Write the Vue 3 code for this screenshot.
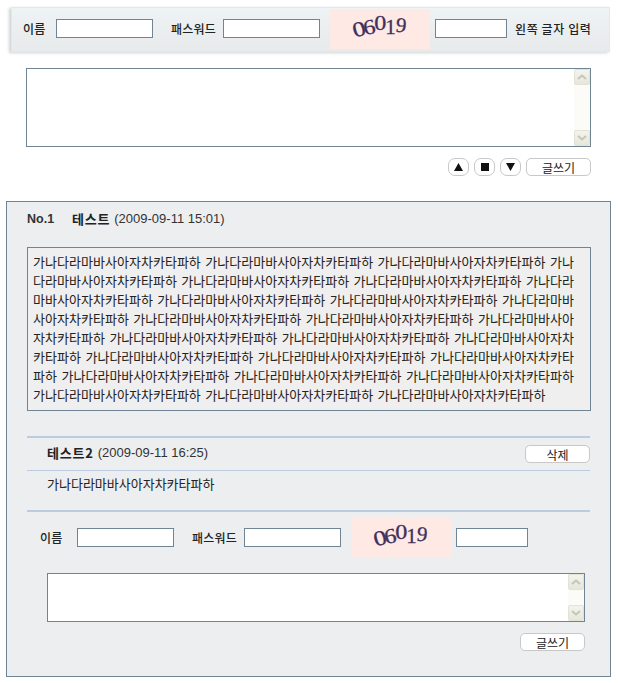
<template>
  <div class="page">
    <form class="bar">
      <label class="lbl name-lbl">이름</label>
      <input class="inp wide" type="text">
      <label class="lbl pw-lbl">패스워드</label>
      <input class="inp wide" type="password">
      <div class="captcha">
        <span v-for="d in digits" :key="d.key" class="digit" :class="d.cls">{{ d.ch }}</span>
      </div>
      <input class="inp short" type="text">
      <label class="lbl hint">왼쪽 글자 입력</label>
    </form>

    <div class="memo memo-top">
      <textarea class="memo-text"></textarea>
      <div class="scroll">
        <div class="scroll-btn">
          <svg width="10" height="6" viewBox="0 0 10 6"><path d="M1 5 5 1.5 9 5" fill="none" stroke="#c4c6b8" stroke-width="2"/></svg>
        </div>
        <div class="scroll-track"></div>
        <div class="scroll-btn">
          <svg width="10" height="6" viewBox="0 0 10 6"><path d="M1 1 5 4.5 9 1" fill="none" stroke="#c4c6b8" stroke-width="2"/></svg>
        </div>
      </div>
    </div>

    <div class="actions">
      <button class="btn icon" type="button"><svg width="9" height="8" viewBox="0 0 9 8"><path d="M4.5 0 9 8H0z" fill="#111"/></svg></button>
      <button class="btn icon" type="button"><svg width="8" height="8" viewBox="0 0 8 8"><rect width="8" height="8" fill="#111"/></svg></button>
      <button class="btn icon" type="button"><svg width="9" height="8" viewBox="0 0 9 8"><path d="M0 0H9L4.5 8z" fill="#111"/></svg></button>
      <button class="btn text" type="button">글쓰기</button>
    </div>

    <section class="panel">
      <div class="post-head">
        <strong class="no">No.1</strong>
        <strong class="writer">테스트</strong>
        <span class="date">(2009-09-11 15:01)</span>
      </div>
      <div class="post-body">{{ bodyText }}</div>

      <div class="comment">
        <div class="comment-head">
          <div class="who">
            <strong class="writer">테스트2</strong>
            <span class="date">(2009-09-11 16:25)</span>
          </div>
          <button class="btn text" type="button">삭제</button>
        </div>
        <div class="comment-body">가나다라마바사아자차카타파하</div>
      </div>

      <form class="reply">
        <div class="reply-row">
          <label class="lbl name-lbl">이름</label>
          <input class="inp wide" type="text">
          <label class="lbl pw-lbl">패스워드</label>
          <input class="inp wide" type="password">
          <div class="captcha">
            <span v-for="d in digits" :key="d.key" class="digit" :class="d.cls">{{ d.ch }}</span>
          </div>
          <input class="inp short" type="text">
        </div>
        <div class="memo memo-reply">
          <textarea class="memo-text"></textarea>
          <div class="scroll">
            <div class="scroll-btn">
              <svg width="10" height="6" viewBox="0 0 10 6"><path d="M1 5 5 1.5 9 5" fill="none" stroke="#c4c6b8" stroke-width="2"/></svg>
            </div>
            <div class="scroll-track"></div>
            <div class="scroll-btn">
              <svg width="10" height="6" viewBox="0 0 10 6"><path d="M1 1 5 4.5 9 1" fill="none" stroke="#c4c6b8" stroke-width="2"/></svg>
            </div>
          </div>
        </div>
        <div class="reply-actions">
          <button class="btn text" type="button">글쓰기</button>
        </div>
      </form>
    </section>
  </div>
</template>

<script setup>
const word = '가나다라마바사아자차카타파하'

const bodyText = Array(25).fill(word).join(' ')

const digits = [
  { key: 1, ch: '0', cls: 'd1' },
  { key: 2, ch: '6', cls: 'd2' },
  { key: 3, ch: '0', cls: 'd3' },
  { key: 4, ch: '1', cls: 'd4' },
  { key: 5, ch: '9', cls: 'd5' }
]
</script>

<style>
body {
  background: #fff;
}
</style>

<style scoped>
.page {
  width: 618px;
  height: 683px;
  overflow: hidden;
  font-family: "Noto Sans CJK KR", "Liberation Sans", sans-serif;
  font-size: 13px;
  color: #222;
  padding-top: 7px;
  box-sizing: border-box;
}
.bar {
  display: flex;
  align-items: center;
  box-sizing: border-box;
  width: 599px;
  height: 45px;
  margin-left: 11px;
  padding: 0 0 2px 11px;
  background: linear-gradient(#eef3f5, #e8eaeb);
  border: 1px solid #e4e8ea;
  box-shadow: -2px 1px 3px #d0d2d4;
}
.lbl {
  font-size: 12px;
  font-weight: 500;
  color: #222;
  letter-spacing: 0.2px;
  white-space: nowrap;
}
.name-lbl {
  width: 33px;
}
.pw-lbl {
  width: 52px;
  margin-left: 18px;
}
.hint {
  margin-left: 8px;
  letter-spacing: 0.6px;
}
.inp {
  box-sizing: border-box;
  height: 19px;
  border: 1px solid #708494;
  background: #fff;
  padding: 0;
  outline: none;
}
.wide {
  width: 97px;
}
.short {
  width: 72px;
}
.captcha {
  display: flex;
  align-items: center;
  justify-content: center;
  width: 100px;
  height: 40px;
  margin: 0 5px 0 10px;
  background: #fee9e5;
  font-family: "Liberation Serif", serif;
  font-size: 21px;
  line-height: 1;
  color: #41305c;
  -webkit-text-stroke: 0.3px #41305c;
}
.digit {
  display: inline-block;
}
.d1 { transform: translateY(1px) rotate(-15deg) scaleX(1.25); }
.d2 { transform: translateY(-1px) rotate(-10deg) scaleX(1.15); }
.d3 { transform: translateY(-5px) scaleX(1.15); }
.d4 { transform: translateY(-1px); }
.d5 { transform: translateY(-3px) rotate(6deg); }
.memo {
  display: flex;
  box-sizing: border-box;
  border: 1px solid #708494;
  background: #fff;
}
.memo-top {
  width: 565px;
  height: 79px;
  margin: 16px 0 0 26px;
}
.memo-text {
  flex: 1;
  border: 0;
  padding: 0;
  resize: none;
  outline: none;
  background: transparent;
}
.scroll {
  display: flex;
  flex-direction: column;
  width: 16px;
  background: #fbfbf8;
}
.scroll-track {
  flex: 1;
}
.scroll-btn {
  display: flex;
  align-items: center;
  justify-content: center;
  height: 16px;
  box-sizing: border-box;
  background: linear-gradient(#f4f4ee, #e6e6da);
  border: 1px solid #e2e2d6;
  border-radius: 2px;
}
.actions {
  display: flex;
  justify-content: flex-end;
  gap: 5px;
  width: 591px;
  margin-top: 11px;
}
.btn {
  box-sizing: border-box;
  height: 18px;
  padding: 0;
  display: flex;
  align-items: center;
  justify-content: center;
  border: 1px solid #c8c8c8;
  border-radius: 5px;
  background: #fff;
  font-family: inherit;
  font-size: 12px;
  color: #222;
}
.btn.icon {
  width: 21px;
  border-radius: 7px;
}
.btn.text {
  width: 65px;
}
.panel {
  box-sizing: border-box;
  width: 605px;
  height: 476px;
  margin: 25px 0 0 6px;
  padding: 0 20px;
  background: #eceef0;
  border: 1px solid #708494;
}
.post-head {
  height: 45px;
  padding-top: 8px;
  box-sizing: border-box;
  display: flex;
  align-items: flex-start;
  line-height: 18px;
}
.who {
  display: flex;
  align-items: center;
  line-height: 18px;
  margin-bottom: 2px;
}
.no {
  width: 45px;
  font-family: "Liberation Sans", sans-serif;
  font-size: 12.5px;
  font-weight: 700;
  color: #333;
}
.writer {
  font-weight: 700;
  font-size: 13px;
  letter-spacing: 0.8px;
  color: #222;
  margin-right: 4px;
}
.date {
  font-family: "Liberation Sans", sans-serif;
  font-size: 13px;
  color: #333;
}
.post-body {
  box-sizing: border-box;
  width: 564px;
  height: 164px;
  padding: 4px 5px;
  background: #efefef;
  border: 1px solid #708494;
  font-size: 13px;
  line-height: 19px;
  word-spacing: 1.5px;
  letter-spacing: 0.03px;
  word-break: break-all;
  color: #222;
}
.comment {
  width: 563px;
  margin-top: 25px;
  border-top: 2px solid #bccbdf;
}
.comment-head {
  display: flex;
  align-items: center;
  justify-content: space-between;
  height: 32px;
  padding-left: 20px;
  border-bottom: 1px solid #bccbdf;
}
.comment-body {
  height: 39px;
  padding: 3px 0 0 20px;
  box-sizing: border-box;
  line-height: 20px;
  font-size: 13px;
}
.reply {
  width: 563px;
  border-top: 2px solid #bccbdf;
}
.reply-row {
  display: flex;
  align-items: center;
  height: 50px;
  padding-left: 13px;
}
.reply-row .name-lbl {
  width: 37px;
}
.memo-reply {
  width: 538px;
  height: 49px;
  margin: 11px 0 0 20px;
}
.reply-actions {
  display: flex;
  justify-content: flex-end;
  width: 558px;
  margin-top: 11px;
}
</style>
